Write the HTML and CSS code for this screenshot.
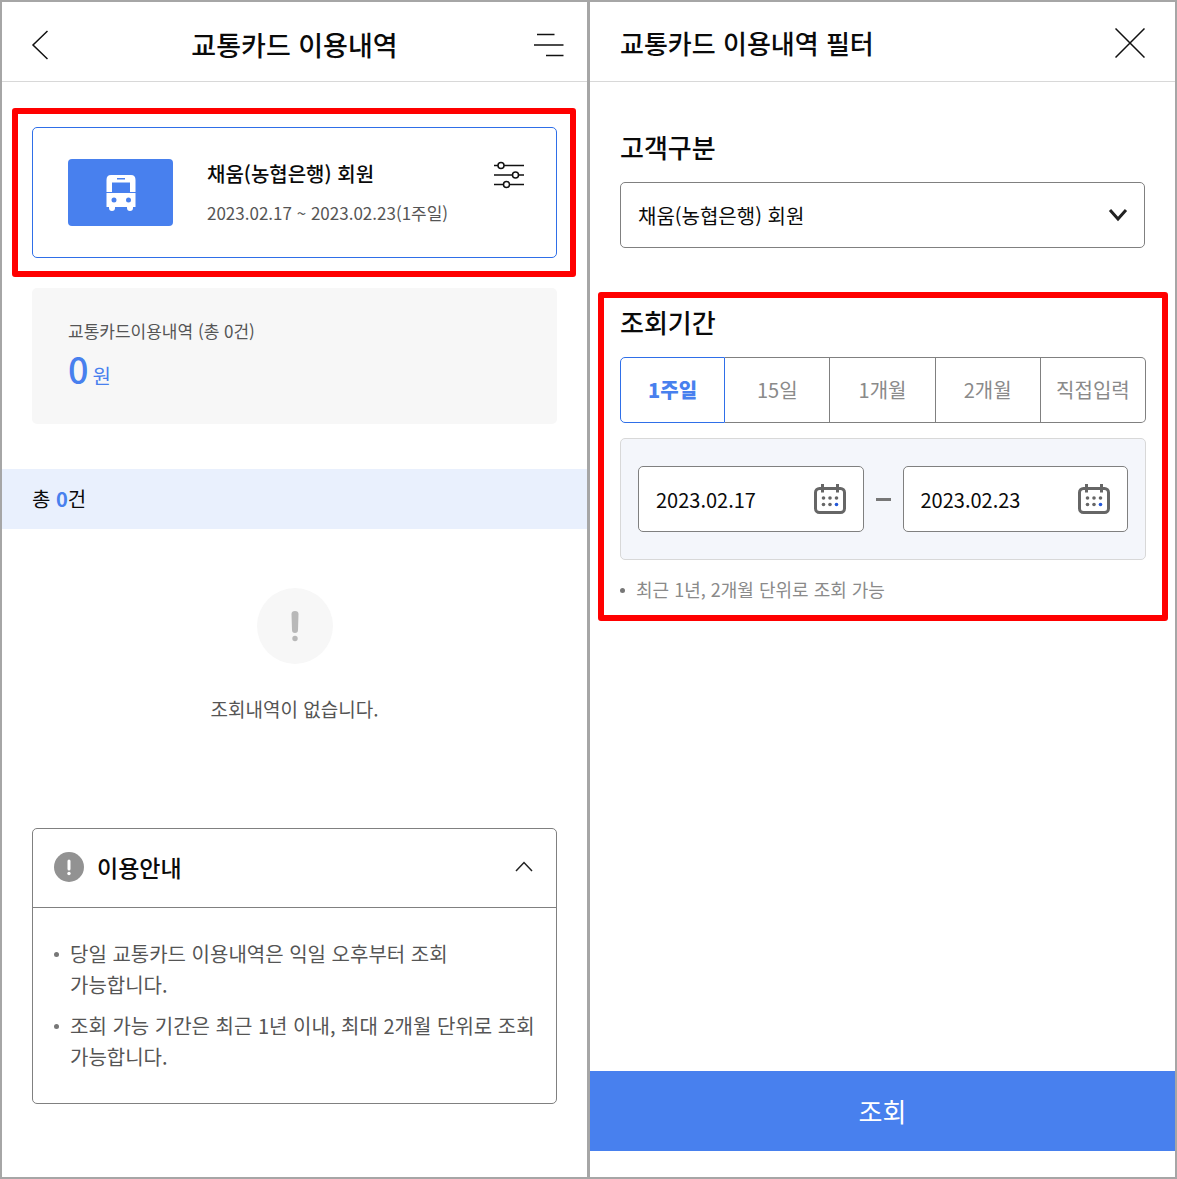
FILE: index.html
```html
<!DOCTYPE html>
<html lang="ko">
<head>
  <meta charset="UTF-8">
  <meta name="viewport" content="width=device-width, initial-scale=1">
  <title>교통카드 이용내역</title>
  <link rel="stylesheet" href="styles.css">
</head>
<body>

  <!-- Usage history -->
  <main class="screen">
    <header class="topbar topbar-main">
      <button class="icon-btn back-btn" type="button" aria-label="뒤로">
        <svg width="18" height="30" viewBox="0 0 18 30"><path d="M17.5 1 L3 15 L17.5 29" /></svg>
      </button>
      <h1 class="title title-center">교통카드 이용내역</h1>
      <button class="icon-btn" type="button" aria-label="메뉴">
        <svg width="32" height="24" viewBox="0 0 32 24"><path d="M4 1.5 H21.5 M1 12 H30.5 M13 22.5 H30.5" /></svg>
      </button>
    </header>

    <div class="mark mark-card">
      <section class="card">
        <div class="card-icon">
          <svg width="30" height="36" viewBox="0 0 30 36">
            <path fill="#fff" fill-rule="evenodd" d="M5 0 H25 Q29.500 0 29.500 5 V17 H24 V7.500 H6 V17 H.5 V5 Q.5 0 5 0 Z M11 3 V4.500 H19 V3 Z" />
            <path fill="#fff" fill-rule="evenodd" d="M.5 18 H29.500 V32 H27 V33 A2.500 2.500 0 0 1 21 33 V32 H9 V33 A2.500 2.500 0 0 1 3 33 V32 H.5 Z M5.500 25 a2.500 2.500 0 1 0 5 0 a2.500 2.500 0 1 0 -5 0 Z M20 25 a2.500 2.500 0 1 0 5 0 a2.500 2.500 0 1 0 -5 0 Z" />
          </svg>
        </div>
        <div class="card-text">
          <h2 class="card-name">채움(농협은행) 회원</h2>
          <p class="card-period">2023.02.17 ~ 2023.02.23(1주일)</p>
        </div>
        <button class="icon-btn filter-btn" type="button" aria-label="필터">
          <svg width="32" height="28" viewBox="0 0 32 28">
            <path d="M1 4.500 H5 M11 4.500 H31 M1 14 H19.500 M25.500 14 H31 M1 23.500 H10.500 M16.500 23.500 H31" />
            <circle cx="8" cy="4.500" r="3" /><circle cx="22.500" cy="14" r="3" /><circle cx="13.500" cy="23.500" r="3" />
          </svg>
        </button>
      </section>
    </div>

    <section class="summary">
      <p class="summary-label">교통카드이용내역 (총 0건)</p>
      <p class="summary-amount"><strong>0</strong><span>원</span></p>
    </section>

    <p class="count-bar">총 <strong>0</strong>건</p>

    <div class="empty">
      <svg width="76" height="76" viewBox="0 0 76 76">
        <circle cx="38" cy="38" r="38" fill="#f7f7f7" />
        <path d="M34.500 26 Q34.500 23 38 23 Q41.500 23 41.500 26 L41 42 Q41 45 38 45 Q35 45 35 42 Z" fill="#b8b8b8" />
        <circle cx="38" cy="50.500" r="2.700" fill="#b8b8b8" />
      </svg>
      <p>조회내역이 없습니다.</p>
    </div>

    <section class="guide">
      <button class="guide-head" type="button" aria-expanded="true">
        <svg width="30" height="30" viewBox="0 0 30 30">
          <circle cx="15" cy="15" r="15" fill="#929292" />
          <path d="M15 9 V17" stroke="#fff" stroke-width="3" stroke-linecap="round" />
          <circle cx="15" cy="21.500" r="1.700" fill="#fff" />
        </svg>
        <span>이용안내</span>
        <svg class="guide-arrow" width="18" height="12" viewBox="0 0 18 12"><path d="M1 10 L9 1.500 L17 10" /></svg>
      </button>
      <ul class="guide-list">
        <li>당일 교통카드 이용내역은 익일 오후부터 조회 가능합니다.</li>
        <li>조회 가능 기간은 최근 1년 이내, 최대 2개월 단위로 조회 가능합니다.</li>
      </ul>
    </section>
  </main>

  <!-- Filter -->
  <form class="screen">
    <header class="topbar">
      <h1 class="title">교통카드 이용내역 필터</h1>
      <button class="icon-btn" type="button" aria-label="닫기">
        <svg width="30" height="30" viewBox="0 0 30 30"><path d="M.5 .5 L29.500 29.500 M29.500 .5 L.5 29.500" /></svg>
      </button>
    </header>

    <div class="customer">
      <label class="field-title" for="customer">고객구분</label>
      <div class="select-box">
        <select id="customer">
          <option>채움(농협은행) 회원</option>
        </select>
        <svg class="select-arrow" width="20" height="14" viewBox="0 0 20 14"><path d="M2 2 L10 11 L18 2" /></svg>
      </div>
    </div>

    <div class="mark mark-period">
      <h2 class="field-title" id="periodTitle">조회기간</h2>
      <div class="periods" role="group" aria-labelledby="periodTitle">
        <button class="active" type="button" aria-pressed="true">1주일</button>
        <button type="button">15일</button>
        <button type="button">1개월</button>
        <button type="button">2개월</button>
        <button type="button">직접입력</button>
      </div>

      <div class="dates">
        <div class="date-field">
          <input type="text" value="2023.02.17" aria-label="시작일">
          <button class="cal-btn" type="button" aria-label="시작일 선택">
            <svg width="32" height="30" viewBox="0 0 32 30">
              <rect x="1.500" y="4.500" width="29" height="24" rx="4" />
              <path d="M8.500 0 V8.500 M23.500 0 V8.500" />
              <g class="dots"><circle cx="9.500" cy="14" r="1.800" /><circle cx="16" cy="14" r="1.800" /><circle cx="22.500" cy="14" r="1.800" /><circle cx="9.500" cy="20.500" r="1.800" /><circle cx="16" cy="20.500" r="1.800" /><circle class="today" cx="22.500" cy="20.500" r="1.800" /></g>
            </svg>
          </button>
        </div>
        <span class="dash"></span>
        <div class="date-field">
          <input type="text" value="2023.02.23" aria-label="종료일">
          <button class="cal-btn" type="button" aria-label="종료일 선택">
            <svg width="32" height="30" viewBox="0 0 32 30">
              <rect x="1.500" y="4.500" width="29" height="24" rx="4" />
              <path d="M8.500 0 V8.500 M23.500 0 V8.500" />
              <g class="dots"><circle cx="9.500" cy="14" r="1.800" /><circle cx="16" cy="14" r="1.800" /><circle cx="22.500" cy="14" r="1.800" /><circle cx="9.500" cy="20.500" r="1.800" /><circle cx="16" cy="20.500" r="1.800" /><circle class="today" cx="22.500" cy="20.500" r="1.800" /></g>
            </svg>
          </button>
        </div>
      </div>

      <p class="note">최근 1년, 2개월 단위로 조회 가능</p>
    </div>

    <button class="submit" type="submit">조회</button>
  </form>

</body>
</html>
```
FILE: styles.css
```css
* { box-sizing: border-box; }
body {
  display: grid;
  grid-template-columns: repeat(2, minmax(0, 1fr));
  gap: 3px;
  min-height: 100vh;
  margin: 0;
  padding: 2px;
  background: #a6a6a6;
  color: #0a0a0a;
  font-family: "Noto Sans CJK KR", sans-serif;
  font-size: 20px;
  line-height: 30px;
  word-break: keep-all;
}
h1, h2, p, ul { margin: 0; padding: 0; }
svg { display: block; flex: none; }
button, input, select {
  margin: 0;
  padding: 0;
  border: none;
  background: none;
  color: inherit;
  font: inherit;
}
button { cursor: pointer; }

.screen {
  display: flex;
  flex-direction: column;
  background: #fff;
}

/* Header */
.topbar {
  display: flex;
  align-items: center;
  justify-content: space-between;
  height: 80px;
  padding: 3px 30px 0;
  border-bottom: 1px solid #d8d8d8;
}
.topbar-main { padding: 6px 22px 0 28px; }
.title {
  font-size: 26px;
  font-weight: 500;
}
.title-center { font-size: 27px; }
.icon-btn svg {
  fill: none;
  stroke: #111;
  stroke-width: 1.5;
}
.back-btn { width: 26px; }

/* Red highlight frames */
.mark {
  border: 6px solid #f00;
  border-radius: 3px;
}
.mark-card {
  margin: 26px 11px 0 10px;
  padding: 13px 13px 13px 14px;
}
.mark-period {
  margin: 44px 7px 0 8px;
  padding: 9px 16px 11px;
}

/* Card */
.card {
  display: flex;
  align-items: center;
  gap: 34px;
  height: 131px;
  padding: 0 31px 0 35px;
  border: 1px solid #2f6fe8;
  border-radius: 5px;
}
.card-icon {
  display: flex;
  align-items: center;
  justify-content: center;
  width: 105px;
  height: 67px;
  border-radius: 4px;
  background: #4880ee;
}
.card-text {
  flex: 1;
  padding-top: 2px;
}
.card-name {
  margin-bottom: 9px;
  font-size: 20px;
  font-weight: 500;
}
.card-period {
  color: #555;
  font-size: 17px;
}
.filter-btn {
  align-self: flex-start;
  margin-top: 33px;
}

/* Summary */
.summary {
  height: 136px;
  margin: 11px 30px 0;
  padding: 28px 36px;
  border-radius: 5px;
  background: #f7f7f7;
}
.summary-label {
  color: #555;
  font-size: 17px;
}
.summary-amount {
  display: flex;
  align-items: baseline;
  gap: 4px;
  color: #4880ee;
  line-height: 44px;
}
.summary-amount strong {
  font-size: 36px;
  font-weight: 500;
}
.count-bar {
  margin-top: 45px;
  padding: 15px 30px;
  background: #e9f0fd;
}
.count-bar strong { color: #4880ee; }

.empty {
  display: flex;
  flex-direction: column;
  align-items: center;
  gap: 30px;
  padding: 59px 0 104px;
  color: #555;
  font-size: 19px;
}

/* Guide */
.guide {
  margin: 0 30px;
  border: 1px solid #808080;
  border-radius: 5px;
}
.guide-head {
  display: flex;
  align-items: center;
  gap: 13px;
  width: 100%;
  height: 79px;
  padding: 0 23px 2px 21px;
  border-bottom: 1px solid #808080;
  font-size: 23px;
  font-weight: 500;
}
.guide-arrow {
  margin-left: auto;
  fill: none;
  stroke: #222;
  stroke-width: 1.5;
}
.guide-list {
  padding: 30px 16px 31px 37px;
  color: #555;
  line-height: 31px;
  list-style: none;
}
.guide-list li + li { margin-top: 10px; }
.guide-list li::before, .note::before {
  content: "";
  float: left;
  width: 5px;
  height: 5px;
  margin: 14px 0 0 -16px;
  border-radius: 50%;
  background: #777;
}

/* Filter form */
.customer {
  margin: 50px 30px 0;
}
.field-title {
  display: block;
  margin-bottom: 20px;
  font-size: 26px;
  font-weight: 500;
}
.select-box { position: relative; }
.select-box select {
  width: 100%;
  height: 66px;
  padding: 2px 48px 0 17px;
  border: 1px solid #808080;
  border-radius: 5px;
  appearance: none;
}
.select-arrow {
  position: absolute;
  top: 26px;
  right: 17px;
  fill: none;
  stroke: #222;
  stroke-width: 3;
  pointer-events: none;
}
.periods {
  display: grid;
  grid-template-columns: repeat(5, 1fr);
}
.periods button {
  height: 66px;
  border: 1px solid #808080;
  border-left: none;
  color: #8a8a8a;
}
.periods button:last-child { border-radius: 0 5px 5px 0; }
.periods button.active {
  border: 1px solid #2f6fe8;
  border-radius: 5px 0 0 5px;
  color: #4880ee;
  font-weight: 900;
}
.dates {
  display: flex;
  align-items: center;
  gap: 12px;
  margin-top: 15px;
  padding: 27px 17px;
  border: 1px solid #d8d8d8;
  border-radius: 5px;
  background: #f4f6fb;
}
.date-field {
  display: flex;
  flex: 1;
  align-items: center;
  min-width: 0;
  height: 66px;
  padding: 0 17px;
  border: 1px solid #808080;
  border-radius: 5px;
  background: #fff;
}
.date-field input {
  flex: 1;
  min-width: 0;
  padding-top: 2px;
}
.cal-btn svg {
  fill: none;
  stroke: #666;
  stroke-width: 3;
}
.cal-btn .dots {
  fill: #666;
  stroke: none;
}
.cal-btn .today { fill: #2458d8; }
.dash {
  width: 15px;
  height: 3px;
  background: #777;
}
.note {
  margin-top: 14px;
  padding-left: 16px;
  color: #8a8a8a;
  font-size: 18px;
}
.submit {
  height: 80px;
  margin: auto 0 26px;
  background: #4880ee;
  color: #fff;
  font-size: 26px;
}
```
